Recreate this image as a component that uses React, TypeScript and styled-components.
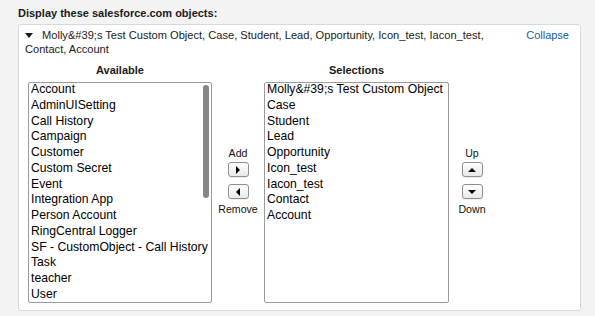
import React from "react";
import styled, { createGlobalStyle } from "styled-components";

const GlobalStyle = createGlobalStyle`
  html, body {
    margin: 0;
    padding: 0;
    background: #f3f3f3;
  }
  body {
    font-family: "Liberation Sans", Arial, sans-serif;
    color: #222;
  }
`;

const available = [
  "Account",
  "AdminUISetting",
  "Call History",
  "Campaign",
  "Customer",
  "Custom Secret",
  "Event",
  "Integration App",
  "Person Account",
  "RingCentral Logger",
  "SF - CustomObject - Call History",
  "Task",
  "teacher",
  "User",
];

const selections = [
  "Molly&#39;s Test Custom Object",
  "Case",
  "Student",
  "Lead",
  "Opportunity",
  "Icon_test",
  "Iacon_test",
  "Contact",
  "Account",
];

type Dir = "up" | "down" | "left" | "right";

const App = () => {
  return (
    <>
      <GlobalStyle />
      <Page>
        <Title>Display these salesforce.com objects:</Title>
        <Panel>
          <SummaryRow>
            <SummaryText>
              <Caret />
              {selections.join(", ")}
            </SummaryText>
            <CollapseLink href="#">Collapse</CollapseLink>
          </SummaryRow>
          <Picker>
            <ColumnHead $col={1}>Available</ColumnHead>
            <ColumnHead $col={3}>Selections</ColumnHead>
            <ListBox>
              <ItemList>
                {available.map((item) => (
                  <Item key={item}>{item}</Item>
                ))}
              </ItemList>
              <ScrollThumb />
            </ListBox>
            <ButtonStack>
              <StackLabel>Add</StackLabel>
              <ArrowButton>
                <Arrow $dir="right" />
              </ArrowButton>
              <ArrowButton $second>
                <Arrow $dir="left" />
              </ArrowButton>
              <StackLabel $bottom>Remove</StackLabel>
            </ButtonStack>
            <ListBox>
              <ItemList>
                {selections.map((item) => (
                  <Item key={item}>{item}</Item>
                ))}
              </ItemList>
            </ListBox>
            <ButtonStack>
              <StackLabel>Up</StackLabel>
              <ArrowButton>
                <Arrow $dir="up" />
              </ArrowButton>
              <ArrowButton $second>
                <Arrow $dir="down" />
              </ArrowButton>
              <StackLabel $bottom>Down</StackLabel>
            </ButtonStack>
          </Picker>
        </Panel>
      </Page>
    </>
  );
};

const Page = styled.div`
  width: 595px;
  height: 316px;
  box-sizing: border-box;
  padding: 6px 0 0 18px;
  background: #f3f3f3;
  overflow: hidden;
`;

const Title = styled.div`
  font-size: 11px;
  font-weight: bold;
  line-height: 15px;
  color: #1a1a1a;
  margin-bottom: 3px;
`;

const Panel = styled.div`
  width: 563px;
  height: 287px;
  box-sizing: border-box;
  background: #fff;
  border: 1px solid #d5dadb;
  border-radius: 3px;
  padding: 3px 11px 0 6px;
`;

const SummaryRow = styled.div`
  display: flex;
  justify-content: space-between;
  align-items: flex-start;
`;

const SummaryText = styled.div`
  width: 490px;
  font-size: 11.1px;
  line-height: 14px;
  color: #1a1a1a;
`;

const Caret = styled.span`
  display: inline-block;
  width: 0;
  height: 0;
  border-left: 4px solid transparent;
  border-right: 4px solid transparent;
  border-top: 5px solid #1a1a1a;
  margin-right: 9px;
  vertical-align: 1px;
`;

const CollapseLink = styled.a`
  font-size: 11px;
  line-height: 14px;
  color: #1b5ca8;
  text-decoration: none;
`;

const Picker = styled.div`
  display: grid;
  grid-template-columns: 184px 52px 185px 46px;
  grid-template-rows: 14px 221px;
  row-gap: 5px;
  margin: 7px 0 0 3px;
`;

const ColumnHead = styled.div<{ $col: number }>`
  grid-column: ${(p) => p.$col};
  grid-row: 1;
  text-align: center;
  font-size: 11px;
  font-weight: bold;
  line-height: 14px;
  color: #1a1a1a;
`;

const ListBox = styled.div`
  grid-row: 2;
  position: relative;
  box-sizing: border-box;
  border: 1px solid #9b9b9b;
  border-radius: 2px;
  background: #fff;
  padding: 0 2px;
  overflow: hidden;
`;

const ItemList = styled.div`
  margin-top: -1px;
`;

const Item = styled.div`
  font-size: 12.2px;
  line-height: 15.77px;
  color: #000;
  white-space: nowrap;
`;

const ScrollThumb = styled.div`
  position: absolute;
  top: 2px;
  right: 2px;
  width: 6px;
  height: 113px;
  border-radius: 3px;
  background: #868686;
`;

const ButtonStack = styled.div`
  grid-row: 2;
  display: flex;
  flex-direction: column;
  align-items: center;
  padding-top: 64px;
`;

const StackLabel = styled.div<{ $bottom?: boolean }>`
  font-size: 10.6px;
  line-height: 14px;
  color: #111;
  margin-top: ${(p) => (p.$bottom ? "3px" : "0")};
`;

const ArrowButton = styled.button<{ $second?: boolean }>`
  width: 21px;
  height: 15px;
  box-sizing: border-box;
  margin: ${(p) => (p.$second ? "7px" : "2px")} 0 0;
  padding: 0;
  border: 1px solid #8f8f8f;
  border-radius: 3px;
  background: linear-gradient(#ffffff, #e9e9e9);
  box-shadow: 0 1px 0 rgba(0, 0, 0, 0.06);
  display: flex;
  align-items: center;
  justify-content: center;
`;

const Arrow = styled.span<{ $dir: Dir }>`
  width: 0;
  height: 0;
  ${(p) =>
    p.$dir === "right"
      ? "border-top: 4px solid transparent; border-bottom: 4px solid transparent; border-left: 4.5px solid #000;"
      : p.$dir === "left"
      ? "border-top: 4px solid transparent; border-bottom: 4px solid transparent; border-right: 4.5px solid #000;"
      : p.$dir === "up"
      ? "border-left: 4.5px solid transparent; border-right: 4.5px solid transparent; border-bottom: 4.5px solid #000;"
      : "border-left: 4.5px solid transparent; border-right: 4.5px solid transparent; border-top: 4.5px solid #000;"}
`;

export default App;
